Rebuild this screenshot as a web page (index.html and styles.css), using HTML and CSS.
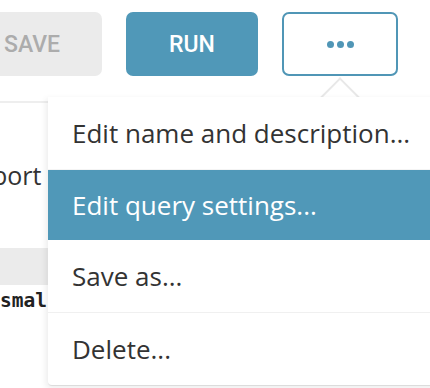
FILE: index.html
```html
<!DOCTYPE html>
<html>
<head>
<meta charset="utf-8">
<link rel="stylesheet" href="styles.css">
</head>
<body>
<div class="toolbar">
  <button class="btn btn-save">SAVE</button>
  <button class="btn btn-run">RUN</button>
  <button class="btn btn-more"><span class="dot"></span><span class="dot"></span><span class="dot"></span></button>
</div>
<div class="content">
  <div class="rule"></div>
  <p class="desc">port</p>
  <div class="band"></div>
  <pre class="code">smal</pre>
</div>
<div class="caret"></div>
<ul class="menu">
  <li class="item first">Edit name and description...</li>
  <li class="item active">Edit query settings...</li>
  <li class="item third">Save as...</li>
  <li class="item">Delete...</li>
</ul>
</body>
</html>
```
FILE: styles.css
```css
html, body {
  margin: 0;
  padding: 0;
  background: #fff;
  overflow: hidden;
  width: 430px;
  height: 388px;
  font-family: "Open Sans", "Noto Sans", sans-serif;
}
.toolbar {
  display: flex;
  gap: 24px;
  padding-top: 12px;
  margin-left: -38px;
}
.btn {
  height: 64px;
  border: none;
  border-radius: 7px;
  font-family: Roboto, "Liberation Sans", sans-serif;
  font-weight: 500;
  font-size: 23px;
  padding: 0;
  display: flex;
  align-items: center;
  justify-content: center;
}
.btn-save {
  width: 140px;
  background: #ebebeb;
  color: #acacac;
}
.btn-run {
  width: 132px;
  background: #5098b8;
  color: #fff;
}
.btn-more {
  width: 116px;
  background: #fff;
  border: 2px solid #5096b6;
  gap: 3px;
}
.dot {
  width: 7px;
  height: 7px;
  border-radius: 50%;
  background: #5096b6;
}
.content {
  padding-top: 25px;
}
.rule {
  height: 2px;
  background: #eeeeee;
}
.desc {
  margin: 0;
  margin-left: -8px;
  padding-top: 55px;
  font-size: 25px;
  line-height: 34px;
  color: #333;
}
.band {
  margin-top: 56px;
  height: 37px;
  background: #ebebeb;
}
.code {
  margin: 0;
  margin-top: 2px;
  font-family: "DejaVu Sans Mono", monospace;
  font-weight: bold;
  font-size: 19.5px;
  line-height: 28px;
  color: #222;
}
.caret {
  position: absolute;
  left: 326px;
  top: 83px;
  width: 28px;
  height: 28px;
  background: #fff;
  border-top: 2px solid #e8e8e8;
  border-left: 2px solid #e8e8e8;
  transform: rotate(45deg);
  box-sizing: border-box;
}
.menu {
  position: absolute;
  left: 48px;
  top: 97px;
  width: 420px;
  margin: 0;
  padding: 0;
  list-style: none;
  background: #fff;
  border-bottom: 1px solid #dcdcdc;
  border-radius: 0 0 0 4px;
  box-shadow: -2px 2px 6px rgba(0,0,0,0.08);
}
.item {
  height: 72px;
  display: flex;
  align-items: center;
  padding-left: 24px;
  font-size: 26px;
  color: #333;
}
.first {
  border-bottom: 1px solid #f4f4f4;
}
.active {
  height: 70px;
  background: #5098b8;
  color: #fff;
}
.third {
  border-bottom: 1px solid #f0f0f0;
}
```
